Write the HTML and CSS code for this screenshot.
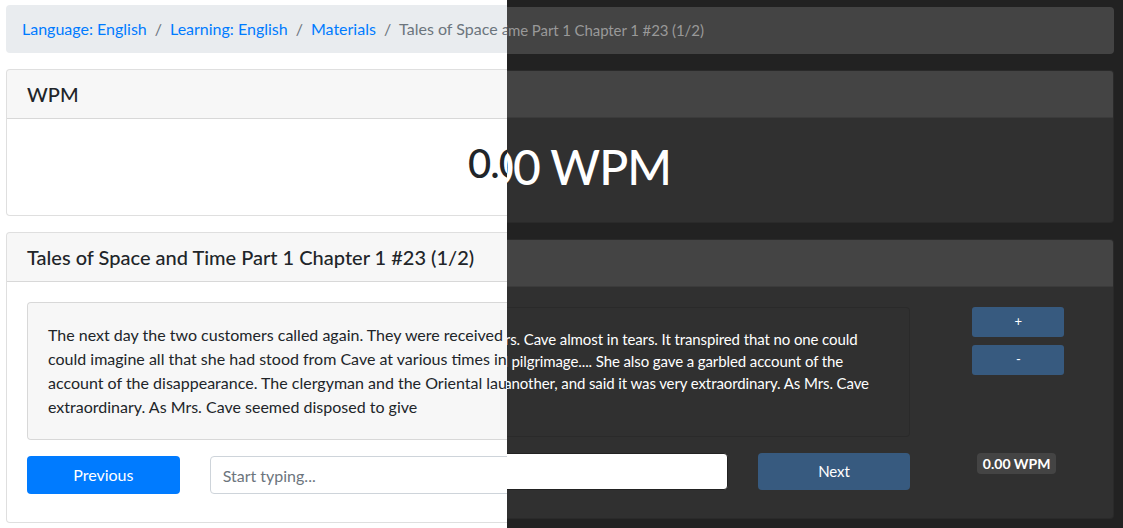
FILE: index.html
```html
<!DOCTYPE html>
<html lang="en">
<head>
<meta charset="utf-8">
<title>Tales of Space and Time Part 1 Chapter 1 #23 (1/2)</title>
<link rel="stylesheet" href="styles.css">
</head>
<body>
<div class="split">
  <div class="half half-light">
    <div class="page theme-light">
      <nav class="breadcrumb">
        <a class="crumb" href="#">Language: English</a>
        <a class="crumb" href="#">Learning: English</a>
        <a class="crumb" href="#">Materials</a>
        <span class="crumb active">Tales of Space and Time Part 1 Chapter 1 #23 (1/2)</span>
      </nav>
      <section class="card">
        <header class="card-header"><h5 class="card-title">WPM</h5></header>
        <div class="card-body"><h1 class="wpm-big">0.00 WPM</h1></div>
      </section>
      <section class="card">
        <header class="card-header"><h5 class="card-title">Tales of Space and Time Part 1 Chapter 1 #23 (1/2)</h5></header>
        <div class="card-body">
          <div class="row">
            <div class="col col-10">
              <div class="passage">The next day the two customers called again. They were received by Mrs. Cave almost in tears. It transpired that no one could imagine all that she had stood from Cave at various times in his married pilgrimage.... She also gave a garbled account of the disappearance. The clergyman and the Oriental laughed silently at one another, and said it was very extraordinary. As Mrs. Cave seemed disposed to give</div>
            </div>
            <div class="col col-2 side">
              <button class="btn btn-sm btn-side">+</button>
              <button class="btn btn-sm btn-side">-</button>
            </div>
          </div>
          <div class="row row-controls">
            <div class="col col-2"><button class="btn btn-main">Previous</button></div>
            <div class="col col-6"><input class="typing" type="text" placeholder="Start typing..."></div>
            <div class="col col-2"><button class="btn btn-main">Next</button></div>
            <div class="col col-2 badge-col"><span class="badge">0.00 WPM</span></div>
          </div>
        </div>
      </section>
    </div>
  </div>
  <div class="half half-dark">
    <div class="page theme-dark">
      <nav class="breadcrumb">
        <a class="crumb" href="#">Language: English</a>
        <a class="crumb" href="#">Learning: English</a>
        <a class="crumb" href="#">Materials</a>
        <span class="crumb active">Tales of Space and Time Part 1 Chapter 1 #23 (1/2)</span>
      </nav>
      <section class="card">
        <header class="card-header"><h5 class="card-title">WPM</h5></header>
        <div class="card-body"><h1 class="wpm-big">0.00 WPM</h1></div>
      </section>
      <section class="card">
        <header class="card-header"><h5 class="card-title">Tales of Space and Time Part 1 Chapter 1 #23 (1/2)</h5></header>
        <div class="card-body">
          <div class="row">
            <div class="col col-10">
              <div class="passage">The next day the two customers called again. They were received by Mrs. Cave almost in tears. It transpired that no one could imagine all that she had stood from Cave at various times in his married pilgrimage.... She also gave a garbled account of the disappearance. The clergyman and the Oriental laughed silently at one another, and said it was very extraordinary. As Mrs. Cave seemed disposed to give</div>
            </div>
            <div class="col col-2 side">
              <button class="btn btn-sm btn-side">+</button>
              <button class="btn btn-sm btn-side">-</button>
            </div>
          </div>
          <div class="row row-controls">
            <div class="col col-2"><button class="btn btn-main">Previous</button></div>
            <div class="col col-6"><input class="typing" type="text" placeholder="Start typing..."></div>
            <div class="col col-2"><button class="btn btn-main">Next</button></div>
            <div class="col col-2 badge-col"><span class="badge">0.00 WPM</span></div>
          </div>
        </div>
      </section>
    </div>
  </div>
</div>
</body>
</html>
```
FILE: styles.css
```css
* { box-sizing: border-box; }
html, body { margin: 0; padding: 0; }
body { width: 1123px; height: 528px; overflow: hidden; }

.split { display: flex; width: 1123px; height: 528px; overflow: hidden; }
.half { height: 528px; overflow: hidden; flex: none; }
.half-light { width: 507px; }
.half-dark { width: 616px; }

.page {
  width: 1123px;
  height: 528px;
  font-family: Lato, "Liberation Sans", sans-serif;
}

/* ---------- light theme ---------- */
.theme-light {
  --bg: #fff;
  --text: #212529;
  --crumb-bg: #e9ecef;
  --link: #007bff;
  --muted: #6c757d;
  --card-bg: #fff;
  --card-border: rgba(0,0,0,.125);
  --header-bg: rgba(0,0,0,.03);
  --passage-bg: rgba(0,0,0,.03);
  --btn-bg: #007bff;
  --side-bg: #007bff;
  --badge-bg: #6c757d;
  --input-border: #ced4da;
  background: var(--bg);
  color: var(--text);
  font-size: 16px;
  line-height: 24px;
  padding: 5px 9px 0 6px;
}
.theme-light .card-title { font-size: 20px; line-height: 24px; }
.theme-light .wpm-big { font-size: 40px; line-height: 48px; margin-bottom: 8px; letter-spacing: -1px; }
.theme-light .typing { height: 38px; }

/* ---------- dark theme ---------- */
.theme-dark {
  --bg: #222;
  --text: #fff;
  --crumb-bg: #444;
  --link: #00bc8c;
  --muted: #999;
  --card-bg: #303030;
  --card-border: rgba(0,0,0,.125);
  --header-bg: #444;
  --passage-bg: #303030;
  --btn-bg: #375a7f;
  --side-bg: #375a7f;
  --badge-bg: #444;
  --input-border: #222;
  background: var(--bg);
  color: var(--text);
  font-size: 15px;
  line-height: 22.5px;
  letter-spacing: -0.1px;
  padding: 7px 9px 0 6px;
  margin-left: -507px;
}
.theme-dark .card-title { font-size: 18.75px; line-height: 22.5px; }
.theme-dark .wpm-big { font-size: 48px; line-height: 57.6px; margin-bottom: 6px; letter-spacing: -1px; }
.theme-dark .passage { line-height: 22px; }
.theme-dark .typing { height: 36.5px; }

/* ---------- shared components ---------- */
.breadcrumb {
  display: flex;
  flex-wrap: wrap;
  padding: 12px 16px;
  margin-bottom: 16px;
  background: var(--crumb-bg);
  border-radius: 4px;
}
.crumb { color: var(--link); text-decoration: none; }
.crumb + .crumb::before {
  content: "/";
  display: inline-block;
  padding: 0 8px;
  color: var(--muted);
}
.crumb.active { color: var(--muted); }

.card {
  background: var(--card-bg);
  border: 1px solid var(--card-border);
  border-radius: 4px;
  margin-bottom: 16px;
  overflow: hidden;
}
.card-header {
  padding: 12px 20px;
  background: var(--header-bg);
  border-bottom: 1px solid var(--card-border);
}
.card-title { margin: 0; font-weight: 500; }
.card-body { padding: 20px; }
.wpm-big { margin-top: 0; font-weight: 500; text-align: center; }

.row { display: flex; margin: 0 -15px; }
.col { padding: 0 15px; flex: none; }
.col-10 { width: 83.3333%; }
.col-6 { width: 50%; }
.col-2 { width: 16.6667%; }

.passage {
  background: var(--passage-bg);
  border: 1px solid var(--card-border);
  border-radius: 4px;
  padding: 20px;
}

.side { display: flex; flex-direction: column; align-items: flex-start; padding-left: 47px; }
.btn {
  font-family: inherit;
  color: #fff;
  border: 1px solid transparent;
  cursor: pointer;
}
.btn-main {
  display: block;
  width: 100%;
  padding: 6px 12px;
  font-size: inherit;
  line-height: inherit;
  letter-spacing: inherit;
  border-radius: 4px;
  background: var(--btn-bg);
}
.btn-sm {
  width: 92px;
  padding: 4px 8px;
  font-size: 13.1px;
  line-height: 19.7px;
  border-radius: 3px;
  background: var(--side-bg);
  margin-bottom: 8px;
}

.row-controls { margin-top: 16px; margin-bottom: 8px; }
.typing {
  display: block;
  width: 100%;
  padding: 6px 12px;
  font-family: inherit;
  font-size: inherit;
  color: #495057;
  background: #fff;
  border: 1px solid var(--input-border);
  border-radius: 4px;
}
.typing::placeholder { color: #6c757d; }

.badge-col { display: flex; justify-content: center; align-items: flex-start; }
.badge {
  display: inline-block;
  background: var(--badge-bg);
  color: #fff;
  font-weight: 700;
  font-size: 14px;
  line-height: 14px;
  padding: 3.5px 5.6px;
  border-radius: 4px;
  letter-spacing: 0;
}
```
